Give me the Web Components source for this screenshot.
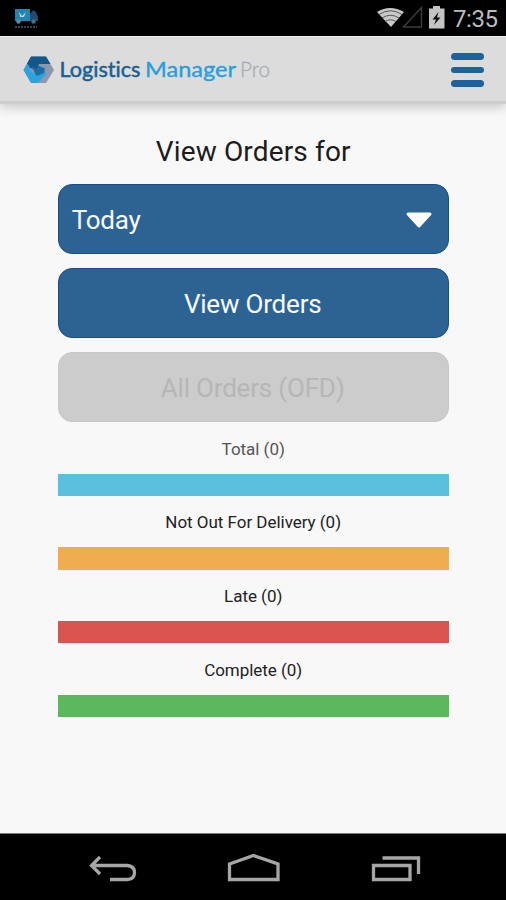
<!DOCTYPE html>
<html lang="en">
<head>
<meta charset="utf-8">
<title>Logistics Manager Pro</title>
<style>
body { margin: 0; font-family: Roboto, "Liberation Sans", sans-serif; background: #f8f8f8; }
</style>
</head>
<body>
<order-app></order-app>
<script>
function define(name, html) {
  const template = document.createElement('template');
  template.innerHTML = html;
  customElements.define(name, class extends HTMLElement {
    constructor() {
      super();
      this.attachShadow({ mode: 'open' }).append(template.content.cloneNode(true));
    }
  });
}

define('status-bar', `
<style>
  :host { display: flex; align-items: center; height: 36px; box-sizing: border-box; background: #000; color: #bcbcbc; }
  svg { display: block; flex: none; }
  .truck { margin-left: 12px; }
  .signals { margin-left: auto; }
  time { width: 45px; margin: 3px 8px 0 6px; font-size: 24px; line-height: 33px; letter-spacing: -.4px; white-space: nowrap; }
</style>
<svg class="truck" width="28" height="36" viewBox="0 0 28 36">
  <path d="M3 9H18V21H3Z" fill="#2185b1"/>
  <path d="M19 13L21 10L24 12L26 17V21H18V14Z" fill="#1d4f70"/>
  <path d="M7 12L10 16L14 12L12 17H8Z" fill="#b4d8e8"/>
  <circle cx="6.5" cy="21.5" r="2.2" fill="#5c8ca4"/><circle cx="21.5" cy="21.5" r="2.2" fill="#477286"/>
  <path d="M3 27H25" stroke="#29485e" stroke-width="2" stroke-dasharray="2 1"/>
</svg>
<svg class="signals" width="72" height="36" viewBox="377 0 72 36">
  <path d="M379 12Q392 4 406 12L393 27Z" fill="#c8c8c8"/>
  <g fill="none" stroke="#555" stroke-width="1"><path d="M381 14.5Q392.500 7 404 14.500M384 18Q392.500 12.500 401 18M387 21.500Q392.500 18 398 21.500"/></g>
  <path d="M405.500 27H423.500V7.500Z" fill="none" stroke="#3d3d3d" stroke-width="1.4"/>
  <path d="M431 8.500H435V6H442V8.500H446.500V28.500H431Z" fill="#c4c4c4"/>
  <path d="M440.500 12L434.500 19.500H438L436 25L442.500 17.500H439Z" fill="#111"/>
</svg>
<time>7:35</time>`);

define('brand-logo', `
<style>
  :host { display: block; padding-top: 5px; }
  svg { display: block; }
  text { font-family: Lato, sans-serif; font-size: 21.500px; font-variant-ligatures: none; }
</style>
<svg width="250" height="36" viewBox="22 52 250 36">
  <path d="M31 56.500H46L54 70L46 83H31L23.500 70Z" fill="#8d98ad"/>
  <path d="M31 56.500H46L50.500 64H39L37 70L30 68L27 63.500Z" fill="#12588b"/>
  <path d="M27 63.500L31.500 72L37 75L44 71L46 74L38 83H31L23.500 70Z" fill="#2ca3dd"/>
  <path d="M31 66L37 70L38 65.500L45 68.500L44 73L36.500 76Z" fill="#1b6ea5"/>
  <text x="59.500" y="77" fill="#195f91" stroke="#195f91" stroke-width=".5" textLength="81" lengthAdjust="spacingAndGlyphs">Logistics</text>
  <text x="145" y="77" fill="#279fda" stroke="#279fda" stroke-width=".35" textLength="91" lengthAdjust="spacingAndGlyphs">Manager</text>
  <text x="240" y="77" fill="#a5abb5" textLength="30" style="font-weight:300" stroke="#a5abb5" stroke-width=".3" lengthAdjust="spacingAndGlyphs">Pro</text>
</svg>`);

define('app-header', `
<style>
  :host { display: flex; align-items: center; justify-content: space-between; height: 68px; padding: 0 22px 4px 22px; box-sizing: border-box; background: #dcdcdc; border-top: 1px solid #ededed; border-bottom: 3px solid #cdcdcd; box-shadow: 0 3px 11px #c4c4c4; clip-path: inset(0 0 -20px 0); }
  .menu { display: grid; gap: 7px; width: 33.500px; padding-top: 6px; }
  .menu i { height: 6.700px; border-radius: 4px; background: #1d629c; }
</style>
<slot></slot>
<div class="menu" role="button" aria-label="Menu"><i></i><i></i><i></i></div>`);

define('order-button', `
<style>
  :host { display: flex; align-items: center; justify-content: center; height: 70.300px; box-sizing: border-box; padding: 2px 14px 0 13px; border: 1.500px solid #144f8b; border-radius: 14px; background: #2c6392; color: #f7faff; font-size: 26px; letter-spacing: -.2px; }
  :host([disabled]) { background: #ccc; border-color: #c8c8c8; color: #b6b6b6; }
  :host([select]) { justify-content: space-between; padding-right: 15px; }
  svg { display: none; padding-top: 1px; }
  :host([select]) svg { display: block; }
</style>
<span><slot></slot></span>
<svg width="28" height="18" viewBox="0 0 28 18"><path d="M3 3H25L14 15Z" fill="#fff" stroke="#fff" stroke-width="3" stroke-linejoin="round"/></svg>`);

define('order-stat', `
<style>
  :host { display: grid; grid-template-rows: 51.300px 22.370px; }
  span { align-self: center; text-align: center; font-size: 17px; line-height: 20px; color: var(--ink, #222); letter-spacing: -.03px; padding-top: 1px; }
  i { background: var(--bar); }
</style>
<span><slot></slot></span><i></i>`);

define('nav-bar', `
<style>
  :host { display: block; height: 67px; background: #000; border-top: 1px solid #777; box-sizing: border-box; }
  svg { display: block; }
</style>
<svg width="506" height="66" viewBox="0 834 506 66" fill="none" stroke="#a6a6a6" stroke-width="3.300">
  <path d="M100 857L91.500 865.500L100 874M92 865.500H127Q134.500 866 134.500 872.500Q134.500 879.500 127 879.500H110"/>
  <path d="M229.500 864L253.500 855.500L278 864V879.500H229.500Z"/>
  <path d="M373.500 865.500H410V879.500H373.500ZM382.500 858H418.500V874"/>
</svg>`);

define('order-app', `
<style>
  :host { display: grid; grid-template-rows: 36px 68px 1fr 67px; height: 900px; background: #f8f8f8; }
  main { display: flex; flex-direction: column; padding: 25.500px 57.300px 0 57.700px; }
  h1 { margin: 0 0 14px; padding-top: 2px; height: 38px; font-size: 28px; line-height: 40px; font-weight: 400; color: #1c1c1c; text-align: center; letter-spacing: .15px; white-space: nowrap; }
  .actions { display: grid; gap: 14px; }
</style>
<status-bar></status-bar>
<app-header><brand-logo></brand-logo></app-header>
<main>
  <h1>View Orders for</h1>
  <div class="actions">
    <order-button select>Today</order-button>
    <order-button>View Orders</order-button>
    <order-button disabled>All Orders (OFD)</order-button>
  </div>
  <order-stat style="--bar:#5bc0de;--ink:#555">Total (0)</order-stat>
  <order-stat style="--bar:#f0ad4e">Not Out For Delivery (0)</order-stat>
  <order-stat style="--bar:#d9534f">Late (0)</order-stat>
  <order-stat style="--bar:#5cb85c">Complete (0)</order-stat>
</main>
<nav-bar></nav-bar>`);
</script>
</body>
</html>
